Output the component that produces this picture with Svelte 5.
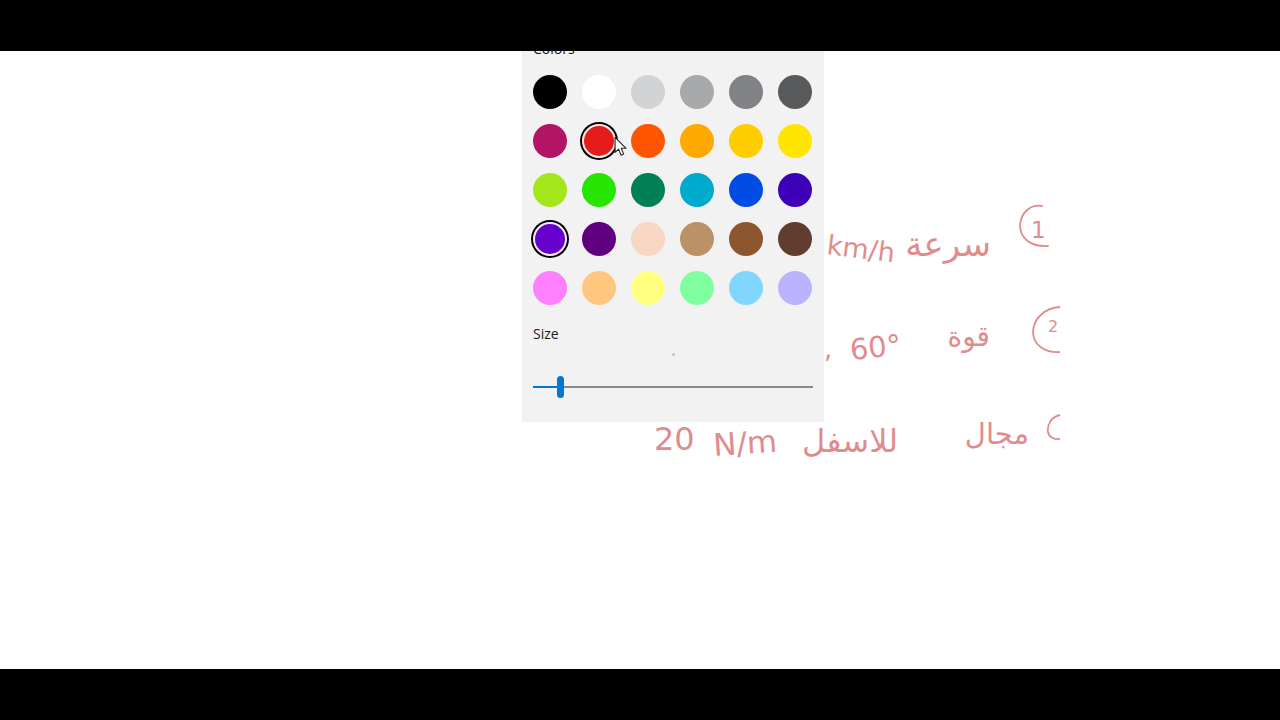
<script>
	const colors = [
		'#000000', '#ffffff', '#d1d3d4', '#a7a9ab', '#808285', '#58595b',
		'#b31564', '#e61b1b', '#ff5500', '#ffaa00', '#ffce00', '#ffe600',
		'#a2e61b', '#26e600', '#008055', '#00aacc', '#004de6', '#3d00b8',
		'#6600cc', '#600080', '#f7d7c4', '#bb9167', '#8e562e', '#613d30',
		'#ff80ff', '#ffc680', '#ffff80', '#80ff9e', '#80d6ff', '#bcb3ff'
	];
	const selected = ['#e61b1b', '#6600cc'];

	// handwriting on the page behind the flyout, in page coordinates
	const notes = [
		{ text: 'km/h', x: 826, y: 254, size: 27, skew: 7, dir: 'ltr' },
		{ text: 'سرعة', x: 991, y: 256, size: 34, skew: 0, dir: 'rtl' },
		{ text: ',', x: 824, y: 358, size: 26, skew: 0, dir: 'ltr' },
		{ text: '60°', x: 851, y: 360, size: 29, skew: -6, dir: 'ltr' },
		{ text: 'قوة', x: 990, y: 346, size: 28, skew: 0, dir: 'rtl' },
		{ text: '20', x: 654, y: 450, size: 32, skew: 0, dir: 'ltr' },
		{ text: 'N/m', x: 714, y: 456, size: 31, skew: -4, dir: 'ltr' },
		{ text: 'للاسفل', x: 898, y: 452, size: 32, skew: 0, dir: 'rtl' },
		{ text: 'مجال', x: 1029, y: 444, size: 29, skew: 0, dir: 'rtl' },
		{ text: '1', x: 1031, y: 238, size: 23, skew: 0, dir: 'ltr' },
		{ text: '2', x: 1048, y: 332, size: 16, skew: 0, dir: 'ltr' }
	];
</script>

<div class="screen">
	<div class="bar"></div>
	<main class="page">
		<svg class="ink" width="1280" height="618" viewBox="0 51 1280 618">
			<defs>
				<clipPath id="sheet"><rect x="0" y="51" width="1060" height="618" /></clipPath>
			</defs>
			<g clip-path="url(#sheet)">
				{#each notes as n}
					<text
						x={n.x}
						y={n.y}
						font-size={n.size}
						direction={n.dir}
						transform="rotate({n.skew} {n.x} {n.y})">{n.text}</text>
				{/each}
				<path d="M1042 206C1030 204 1021 213 1020 225C1020 238 1030 247 1048 246" />
				<path d="M1060 307C1043 308 1033 320 1033 333C1034 346 1046 353 1060 352" />
				<path d="M1060 415C1051 417 1047 425 1048 432C1049 437 1054 440 1060 439" />
			</g>
		</svg>

		<section class="flyout">
			<div class="label colors-label">Colors</div>
			<div class="swatches">
				{#each colors as c}
					<span class="swatch" class:on={selected.includes(c)} style="background: {c}"></span>
				{/each}
			</div>
			<div class="label size-label">Size</div>
			<div class="preview"><span class="dot"></span></div>
			<div class="slider">
				<span class="track-on"></span>
				<span class="thumb"></span>
				<span class="track-off"></span>
			</div>
		</section>

		<svg class="cursor" width="14" height="22" viewBox="0 0 13 20">
			<path d="M1 1V15L4.3 12L6.6 17.6L9 16.6L6.7 11.2H11.2Z" fill="#fff" stroke="#222" stroke-width="1" stroke-linejoin="round" />
		</svg>
	</main>
	<div class="bar"></div>
</div>

<style>
	:global(body) {
		margin: 0;
		background: #fff;
	}
	.screen {
		display: flex;
		flex-direction: column;
		height: 720px;
		font-family: "Open Sans", "Liberation Sans", sans-serif;
	}
	.bar {
		height: 51px;
		background: #000;
	}
	.page {
		position: relative;
		flex: 1;
		overflow: hidden;
		background: #fff;
	}
	.ink {
		position: absolute;
		inset: 0;
	}
	.ink text {
		font-family: "DejaVu Sans", sans-serif;
		font-weight: 400;
		fill: #e08c8c;
	}
	.ink path {
		fill: none;
		stroke: #e08c8c;
		stroke-width: 1.8;
		stroke-linecap: round;
	}
	.flyout {
		position: relative;
		display: flex;
		flex-direction: column;
		width: 280px;
		height: 371px;
		margin-left: 522px;
		padding: 0 11px;
		background: #f2f2f2;
		overflow: hidden;
	}
	.label {
		font-size: 14px;
		line-height: 20px;
		color: #1a1a1a;
	}
	.colors-label {
		margin-top: -12px;
	}
	.swatches {
		display: grid;
		grid-template-columns: repeat(6, 34px);
		gap: 15px;
		margin-top: 16px;
	}
	.swatch {
		width: 34px;
		height: 34px;
		border-radius: 50%;
	}
	.swatch.on {
		box-shadow: inset 0 0 0 2px #f4ecec, 0 0 0 2px #000;
	}
	.size-label {
		margin-top: 19px;
	}
	.preview {
		display: flex;
		justify-content: center;
		margin-top: 9px;
	}
	.dot {
		width: 3px;
		height: 3px;
		border-radius: 50%;
		background: #c0c0c0;
	}
	.slider {
		display: flex;
		align-items: center;
		height: 22px;
		margin-top: 20px;
	}
	.track-on {
		width: 24px;
		height: 2px;
		background: #0078d4;
	}
	.thumb {
		width: 7px;
		height: 22px;
		border-radius: 4px;
		background: #0078d4;
	}
	.track-off {
		flex: 1;
		height: 2px;
		background: #8a8a8a;
	}
	.cursor {
		position: absolute;
		left: 614px;
		top: 85px;
	}
</style>
